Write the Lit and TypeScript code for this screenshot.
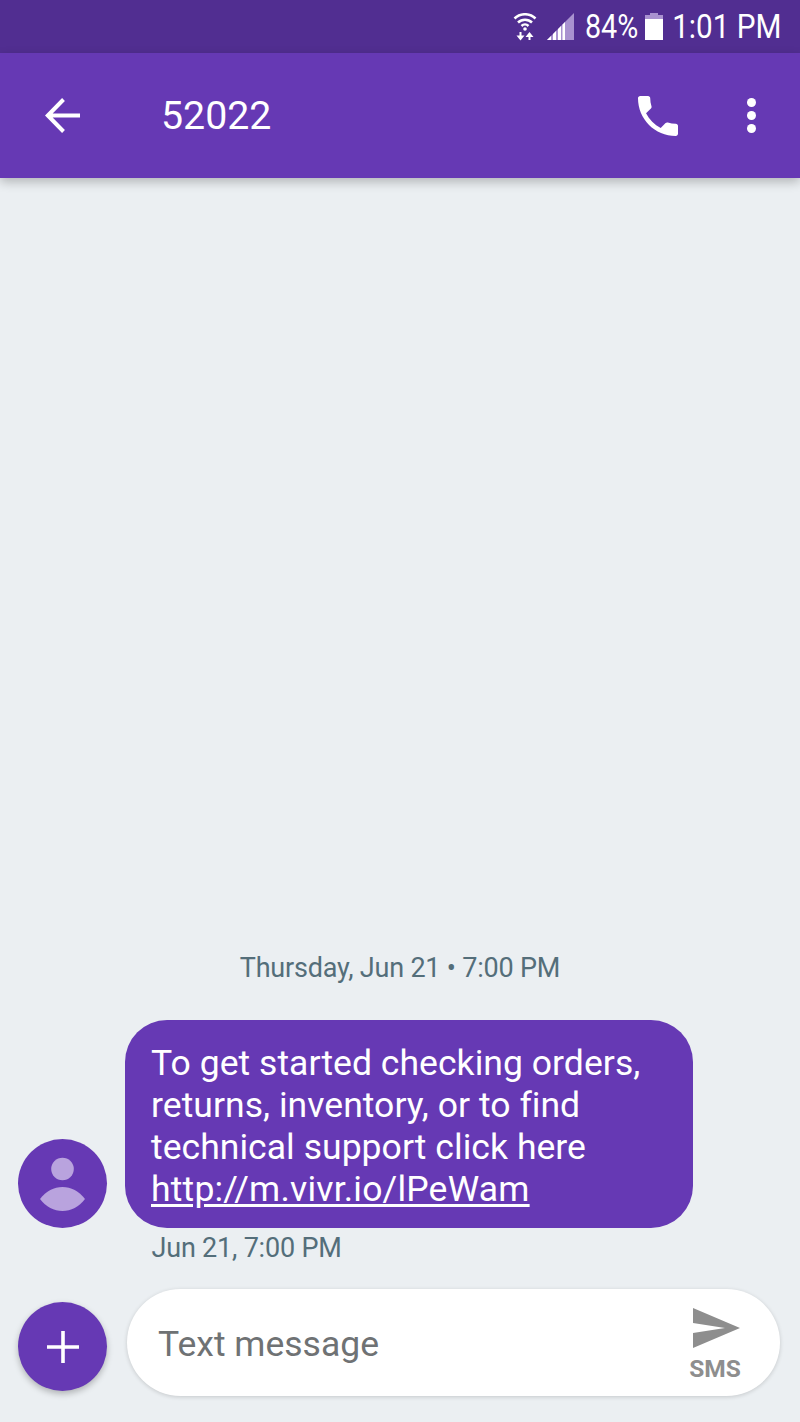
import { LitElement, html, css } from "lit";
import { customElement } from "lit/decorators.js";

@customElement("app-root")
export class AppRoot extends LitElement {
  static styles = css`
    :host { display: block; width: 800px; height: 1422px; font-family: Roboto, "Liberation Sans", sans-serif; }
    .page { width: 800px; height: 1422px; background: #ebeff2; display: flex; flex-direction: column; overflow: hidden; }
    .status { height: 53px; flex: none; background: #512e91; display: flex; align-items: center; justify-content: flex-end; padding-right: 19px; color: #fff; box-sizing: border-box; }
    .status svg { display: block; flex: none; }
    .wifi { margin-right: 10px; }
    .signal { margin-right: 11px; }
    .pct { display: inline-block; font-size: 33px; line-height: 53px; transform: scaleX(.87); transform-origin: right center; margin-left: -8px; margin-right: 6px; }
    .batt { margin-right: 9px; }
    .time { display: inline-block; font-size: 33px; line-height: 53px; transform: scaleX(.9); transform-origin: right center; margin-left: -12px; }
    .bar { height: 125px; flex: none; background: #6639b4; display: flex; align-items: center; color: #fff; box-shadow: 0 4px 10px rgba(0,0,0,.24); position: relative; z-index: 1; }
    .back { margin-left: 45px; }
    .title { font-size: 39.3px; margin-left: 81px; flex: 1; line-height: 44px; }
    .phone { margin-right: 69px; }
    .more { margin-right: 44px; }
    .bar svg { display: block; flex: none; }
    .thread { flex: 1; display: flex; flex-direction: column; justify-content: flex-end; }
    .stamp { text-align: center; font-size: 27px; letter-spacing: -0.2px; line-height: 32px; color: #546e7a; margin-bottom: 36px; }
    .row { display: flex; align-items: flex-end; padding-left: 18px; }
    .avatar { width: 89px; height: 89px; border-radius: 50%; background: #6639b4; flex: none; display: block; }
    .bubble { margin-left: 18px; width: 568px; height: 208px; box-sizing: border-box; background: #6639b4; border-radius: 42px; color: #fff; padding: 22px 26px; font-size: 35.5px; letter-spacing: 0.05px; line-height: 42px; }
    .bubble a { color: #fff; text-decoration: underline; text-underline-offset: 3px; letter-spacing: 0.2px; }
    .meta { margin: 4px 0 25px 151.5px; font-size: 27px; letter-spacing: -0.2px; line-height: 32px; color: #546e7a; }
    .composer { display: flex; align-items: flex-start; padding: 0 20px 26px 18px; }
    .fab { width: 89px; height: 89px; margin-top: 13px; border-radius: 50%; background: #6639b4; box-shadow: 0 3px 6px rgba(0,0,0,.25); flex: none; display: flex; align-items: center; justify-content: center; }
    .field { margin-left: 20px; flex: 1; height: 107px; background: #fff; border-radius: 54px; box-shadow: 0 1px 4px rgba(0,0,0,.16); display: flex; justify-content: space-between; padding: 0 39px 0 31px; box-sizing: border-box; }
    .ph { font-size: 35.5px; color: #6f7274; line-height: 44px; margin-top: 33px; }
    .send { display: flex; flex-direction: column; align-items: center; width: 52px; padding-top: 19px; }
    .send svg { display: block; margin-left: 3px; }
    .sms { font-size: 24.5px; font-weight: 700; color: #8e8e8e; line-height: 28px; margin-top: 7px; }
  `;

  render() {
    return html`<div class="page">
      <div class="status">
        <svg class="wifi" width="24" height="28" viewBox="0 0 24 28" fill="none" stroke="#fff" stroke-width="2.500">
          <path d="M1.500 5.500 A15 15 0 0 1 22.500 5.500"/><path d="M5 9.500 A10 10 0 0 1 19 9.500"/><path d="M8.500 13 A5 5 0 0 1 15.500 13"/>
          <circle cx="12" cy="16" r="1.800" fill="#fff" stroke="none"/>
          <path d="M7.500 19v6M16.500 27v-6" stroke-width="2"/>
          <path d="M3.500 22.500 L7.500 27.500 L11.500 22.500Z M12.500 24 L16.500 19 L20.500 24Z" fill="#fff" stroke="none"/>
        </svg>
        <svg class="signal" width="27" height="27" viewBox="0 0 27 27">
          <path d="M27 0V27H0Z" fill="#a992d0"/>
          <path d="M0 27 L4 23 V27Z M6 27 V21 L9 18 V27Z M11 27 V16 L14 13 V27Z M15.500 27 V11.500 L18 9 V27Z" fill="#fff"/>
        </svg>
        <span class="pct">84%</span>
        <svg class="batt" width="18" height="27" viewBox="0 0 18 27">
          <rect x="5" y="0" width="8" height="3" fill="#a992d0"/><rect x="0" y="2" width="18" height="4" fill="#a992d0"/>
          <rect x="0" y="6" width="18" height="21" fill="#fff"/>
        </svg>
        <span class="time">1:01 PM</span>
      </div>
      <div class="bar">
        <svg class="back" width="35" height="35" viewBox="0 0 35 35" fill="none" stroke="#fff" stroke-width="4"><path d="M35 17.500H3M18.500 1.500 2.800 17.500 18.500 33.500"/></svg>
        <span class="title">52022</span>
        <svg class="phone" width="40" height="40" viewBox="3 3 18 18" fill="#fff"><path d="M6.620 10.790c1.440 2.830 3.760 5.140 6.590 6.590l2.200-2.200c.27-.27.67-.36 1.020-.24 1.120.37 2.330.57 3.570.57.550 0 1 .45 1 1V20c0 .55-.45 1-1 1-9.390 0-17-7.610-17-17 0-.55.45-1 1-1h3.500c.55 0 1 .45 1 1 0 1.250.2 2.450.57 3.570.11.350.03.740-.25 1.020l-2.200 2.200z"/></svg>
        <svg class="more" width="9" height="35" viewBox="0 0 9 35" fill="#fff"><circle cx="4.500" cy="4.500" r="4.500"/><circle cx="4.500" cy="17.500" r="4.500"/><circle cx="4.500" cy="30.500" r="4.500"/></svg>
      </div>
      <div class="thread">
        <div class="stamp">Thursday, Jun 21 • 7:00 PM</div>
        <div class="row">
          <svg class="avatar" viewBox="0 0 89 89">
            <circle cx="44.500" cy="30" r="11.300" fill="#b9a3de"/>
            <path d="M22 60 C28 52 36 48 44.500 48 C53 48 61 52 67 60 C61 68 53 72 44.500 72 C36 72 28 68 22 60Z" fill="#b9a3de"/>
          </svg>
          <div class="bubble">To get started checking orders,<br>returns, inventory, or to find<br>technical support click here<br><a>http://m.vivr.io/lPeWam</a></div>
        </div>
        <div class="meta">Jun 21, 7:00 PM</div>
        <div class="composer">
          <div class="fab"><svg width="32" height="32" viewBox="0 0 32 32" fill="#fff"><path d="M14.200 0h3.600v14.200H32v3.600H17.800V32h-3.600V17.800H0v-3.600h14.200z"/></svg></div>
          <div class="field">
            <span class="ph">Text message</span>
            <div class="send">
              <svg width="47" height="40" viewBox="0 0 47 40" fill="#8e8e8e"><path d="M0 0 47 20 0 40V25L32 20 0 15Z"/></svg>
              <span class="sms">SMS</span>
            </div>
          </div>
        </div>
      </div>
    </div>`;
  }
}
